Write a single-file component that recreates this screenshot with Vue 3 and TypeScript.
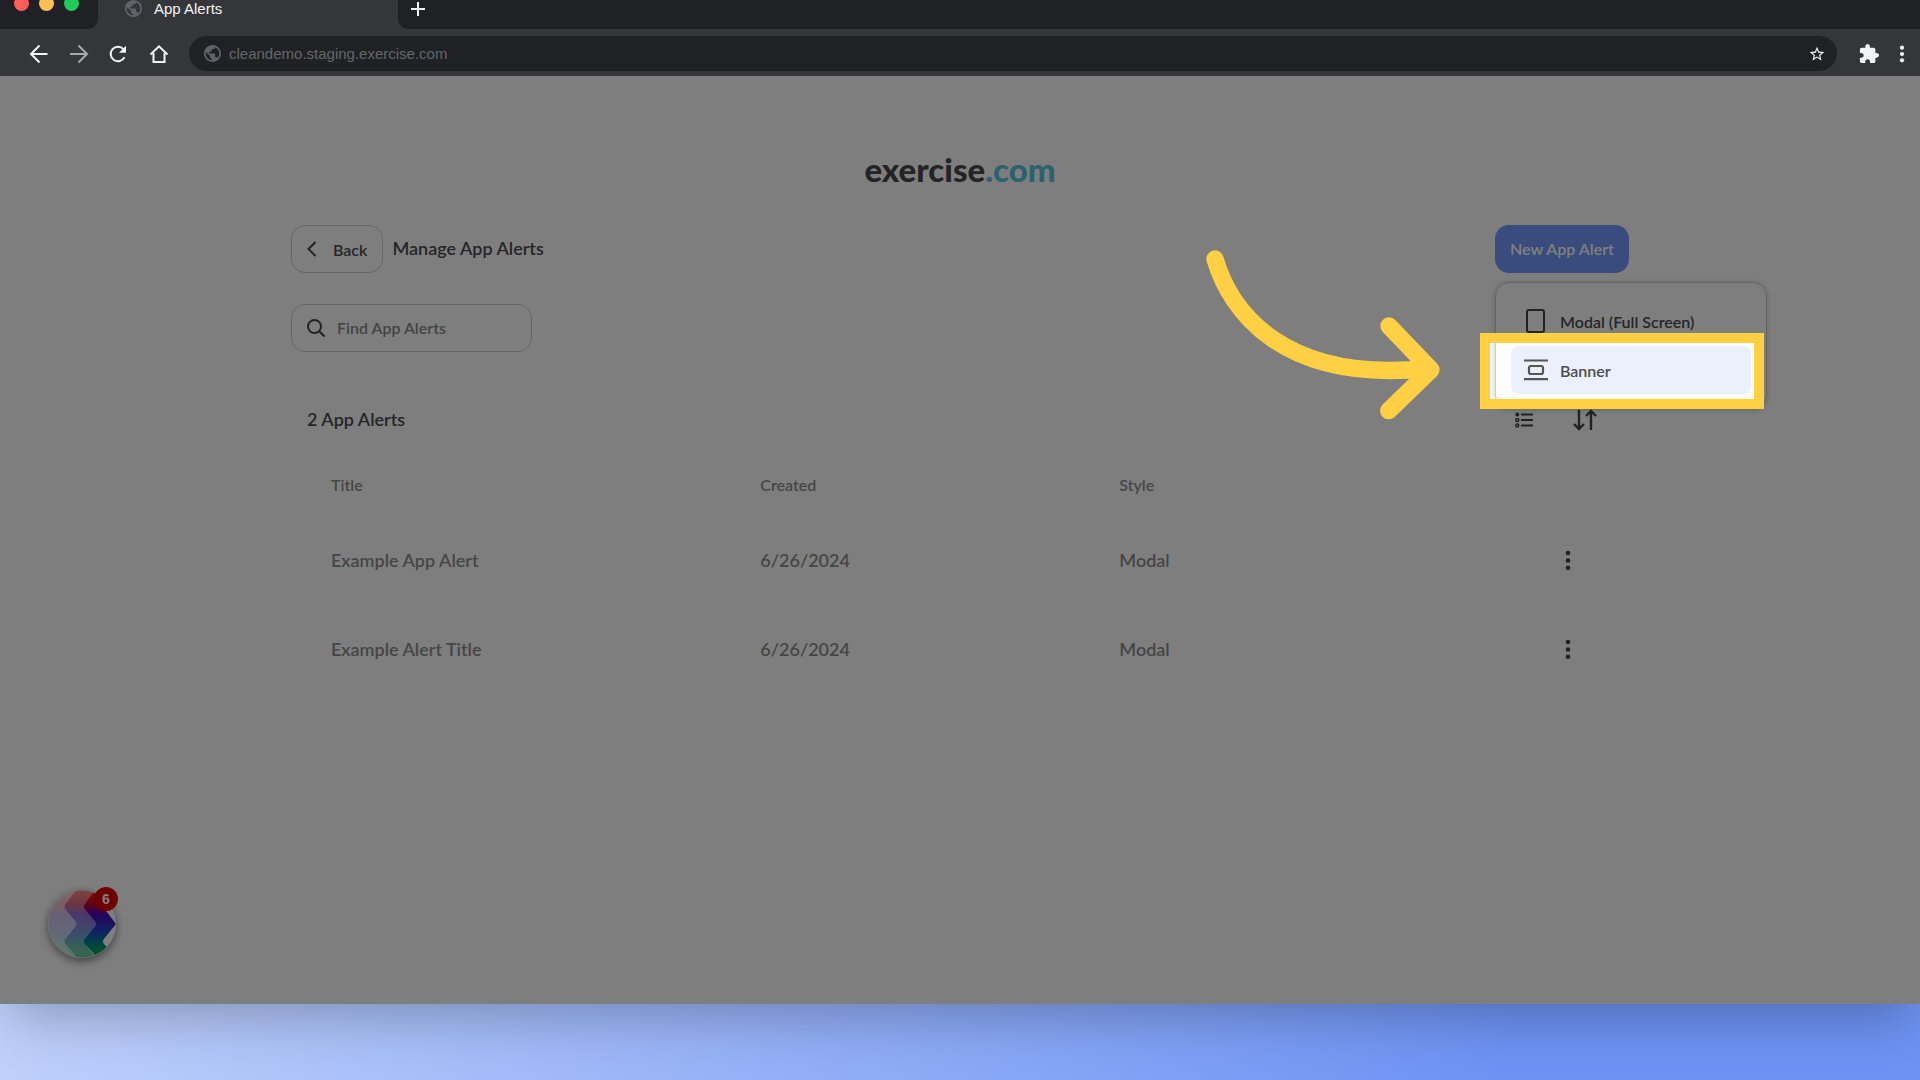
<script setup lang="ts">
import { ref } from 'vue'

interface AppAlert {
  title: string
  created: string
  style: string
}

const query = ref('')
const alerts: AppAlert[] = [
  { title: 'Example App Alert', created: '6/26/2024', style: 'Modal' },
  { title: 'Example Alert Title', created: '6/26/2024', style: 'Modal' },
]
</script>

<template>
  <div class="stage">
    <div class="window">
      <header class="chrome">
        <div class="tabs">
          <div class="lights"><i class="red"></i><i class="amber"></i><i class="green"></i></div>
          <div class="tab">
            <svg class="globe" viewBox="2 2 20 20"><path d="M12 2C6.48 2 2 6.48 2 12s4.48 10 10 10 10-4.48 10-10S17.52 2 12 2zm-1 17.93c-3.95-.49-7-3.85-7-7.93 0-.62.08-1.21.21-1.79L9 15v1c0 1.1.9 2 2 2v1.93zm6.9-2.54c-.26-.81-1-1.39-1.9-1.39h-1v-3c0-.55-.45-1-1-1H8v-2h2c.55 0 1-.45 1-1V7h2c1.1 0 2-.9 2-2v-.41c2.93 1.19 5 4.06 5 7.41 0 2.08-.8 3.97-2.1 5.39z" /></svg>
            <span>App Alerts</span>
          </div>
          <div class="tabs-rest">
            <button class="plain" aria-label="New tab">
              <svg width="16" height="16" viewBox="0 0 16 16"><path d="M8 2v14M1 9h14" stroke="#f1f3f4" stroke-width="2" /></svg>
            </button>
          </div>
        </div>
        <div class="toolbar">
          <button class="plain" aria-label="Go back">
            <svg width="20" height="20" viewBox="0 0 20 20" fill="none" stroke="#f1f3f4" stroke-width="2"><path d="M18.500 10H3M10.500 1.500L2 10l8.500 8.500" /></svg>
          </button>
          <button class="plain" aria-label="Go forward">
            <svg width="20" height="20" viewBox="0 0 20 20" fill="none" stroke="#a6a8ab" stroke-width="2"><path d="M1 10h16M9.500 1.500L18 10l-8.500 8.500" /></svg>
          </button>
          <button class="plain" aria-label="Reload">
            <svg width="20" height="20" viewBox="0 0 20 20" fill="none" stroke="#f1f3f4" stroke-width="2"><path d="M15.500 13.300A7.300 7.300 0 1 1 14.500 5.200" /><path d="M17 1.800v7h-7z" fill="#f1f3f4" stroke="none" /></svg>
          </button>
          <button class="plain" aria-label="Home">
            <svg width="20" height="20" viewBox="0 0 20 20" fill="none" stroke="#f1f3f4" stroke-width="2"><path d="M1.500 10.500L10 2.300l8.500 8.200M4.500 9v9h11V9" /></svg>
          </button>
          <div class="address">
            <svg class="globe" viewBox="2 2 20 20"><path d="M12 2C6.480 2 2 6.480 2 12s4.480 10 10 10 10-4.480 10-10S17.520 2 12 2zm-1 17.930c-3.950-.49-7-3.850-7-7.930 0-.62.08-1.210.21-1.790L9 15v1c0 1.100.9 2 2 2v1.930zm6.900-2.540c-.26-.81-1-1.390-1.900-1.390h-1v-3c0-.55-.45-1-1-1H8v-2h2c.55 0 1-.45 1-1V7h2c1.100 0 2-.9 2-2v-.41c2.930 1.190 5 4.060 5 7.410 0 2.080-.8 3.970-2.100 5.390z" /></svg>
            <input aria-label="Address" value="cleandemo.staging.exercise.com" />
            <svg width="16" height="16" viewBox="1 1 22 22" fill="#f1f3f4"><path d="M22 9.240l-7.190-.62L12 2 9.190 8.630 2 9.240l5.460 4.730L5.820 21 12 17.270 18.180 21l-1.630-7.030L22 9.240zM12 15.400l-3.760 2.270 1-4.280-3.320-2.880 4.380-.38L12 6.100l1.710 4.040 4.380.38-3.320 2.880 1 4.280L12 15.400z" /></svg>
          </div>
          <svg width="20" height="20" viewBox="1 1 22 22" fill="#f1f3f4"><path d="M20.500 11H19V7c0-1.100-.9-2-2-2h-4V3.500C13 2.120 11.880 1 10.500 1S8 2.120 8 3.500V5H4c-1.100 0-1.990.9-1.990 2v3.800H3.500c1.490 0 2.700 1.210 2.700 2.700s-1.210 2.700-2.700 2.700H2V20c0 1.100.9 2 2 2h3.800v-1.500c0-1.490 1.210-2.700 2.700-2.700 1.490 0 2.700 1.210 2.700 2.700V22H17c1.100 0 2-.9 2-2v-4h1.500c1.380 0 2.500-1.120 2.500-2.500S21.880 11 20.500 11z" /></svg>
          <svg width="6" height="20" viewBox="0 0 6 20" fill="#f1f3f4"><circle cx="3" cy="3.700" r="2.100" /><circle cx="3" cy="10" r="2.100" /><circle cx="3" cy="16.300" r="2.100" /></svg>
        </div>
      </header>

      <main class="page">
        <a class="logo" href="#">exercise<span>.com</span></a>
        <div class="content">
          <div class="heading">
            <button class="back">
              <svg width="10" height="16" viewBox="0 0 10 16" fill="none" stroke="#444" stroke-width="2"><path d="M8.500 1L1.500 8l7 7" /></svg>
              Back
            </button>
            <h1>Manage App Alerts</h1>
            <div class="create">
              <button class="new-alert">New App Alert</button>
              <div class="menu">
                <button class="item">
                  <svg width="24" height="24" viewBox="0 0 24 24" fill="none" stroke="#444" stroke-width="2"><rect x="3" y="1" width="17" height="22" rx="2" /></svg>
                  Modal (Full Screen)
                </button>
                <button class="item active">
                  <svg width="24" height="24" viewBox="0 0 24 24" fill="none" stroke="#555" stroke-width="2.200"><path d="M0 2.500h24M0 21.200h24" /><rect x="5" y="8" width="14" height="8" rx="2" /></svg>
                  Banner
                </button>
              </div>
              <div class="spotlight"></div>
              <svg class="pointer" width="300" height="220" viewBox="0 0 900 660" fill="none" stroke="#ffd043" stroke-width="52" stroke-linecap="round" stroke-linejoin="round"><path d="M105 117C150 270 305 492 745 445" /><path d="M627 318L753 449 626 572" /></svg>
            </div>
          </div>

          <label class="search">
            <svg width="18" height="18" viewBox="0 0 18 18" fill="none" stroke="#444" stroke-width="2"><circle cx="7.500" cy="7.500" r="6.500" /><path d="M12 12l5.500 5.500" /></svg>
            <input v-model="query" type="text" placeholder="Find App Alerts" aria-label="Find App Alerts" />
          </label>

          <div class="summary">
            <h2>2 App Alerts</h2>
            <div class="tools">
              <button class="plain" aria-label="List view">
                <svg width="18" height="18" viewBox="0 0 18 18" fill="none" stroke="#444"><path d="M6 3.500h12M6 9h12M6 14.500h12" stroke-width="2" /><circle cx="2.300" cy="3.500" r="2" fill="#444" stroke="none" /><circle cx="2.300" cy="9" r="1.500" stroke-width="1.500" /><circle cx="2.300" cy="14.500" r="1.500" stroke-width="1.500" /></svg>
              </button>
              <button class="plain" aria-label="Sort">
                <svg width="24" height="22" viewBox="0 0 24 22" fill="none" stroke="#444" stroke-width="2.400"><path d="M6 1v19M1 15l5 5 5-5M18 21V2M13 7l5-5 5 5" /></svg>
              </button>
            </div>
          </div>

          <table>
            <thead>
              <tr>
                <th class="c-title">Title</th>
                <th class="c-created">Created</th>
                <th>Style</th>
                <th class="c-actions" aria-label="Actions"></th>
              </tr>
            </thead>
            <tbody>
              <tr v-for="alert in alerts" :key="alert.title">
                <td class="c-title">{{ alert.title }}</td>
                <td>{{ alert.created }}</td>
                <td>{{ alert.style }}</td>
                <td class="c-actions">
                  <button class="plain" aria-label="More actions">
                    <svg width="6" height="20" viewBox="0 0 6 20" fill="#444"><circle cx="3" cy="3" r="2.300" /><circle cx="3" cy="10.500" r="2.300" /><circle cx="3" cy="17.700" r="2.300" /></svg>
                  </button>
                </td>
              </tr>
            </tbody>
          </table>
        </div>

        <button class="launcher" aria-label="Open messages">
          <svg width="68" height="68" viewBox="0 0 204 204">
            <defs>
              <linearGradient id="bolt" x1="0" y1="0" x2="0" y2="204" gradientUnits="userSpaceOnUse">
                <stop offset="0" stop-color="#ff3020" />
                <stop offset=".2" stop-color="#c00020" />
                <stop offset=".36" stop-color="#4808b8" />
                <stop offset=".58" stop-color="#2838c8" />
                <stop offset=".74" stop-color="#007898" />
                <stop offset=".88" stop-color="#00a060" />
              </linearGradient>
              <clipPath id="disc"><circle cx="102" cy="102" r="101" /></clipPath>
            </defs>
            <g clip-path="url(#disc)">
              <rect width="204" height="204" fill="#fff" />
              <path d="M0 0H85L52 42Q46 50 52 58L82 94Q88 102 82 110L52 146Q46 154 52 162L88 204H0z" fill="url(#bolt)" opacity=".25" />
              <path d="M85 0H140L110 42Q104 50 110 58L140 94Q146 102 140 110L110 146Q104 154 110 162L146 204H88L52 162Q46 154 52 146L82 110Q88 102 82 94L52 58Q46 50 52 42z" fill="url(#bolt)" opacity=".58" />
              <path d="M140 0H172L166 52 204 102 168 146Q162 154 168 162L176 170 150 204 110 162Q104 154 110 146L140 110Q146 102 140 94L110 58Q104 50 110 42z" fill="url(#bolt)" />
            </g>
          </svg>
          <span class="count">6</span>
        </button>
      </main>
    </div>
  </div>
</template>

<style>
body {
  margin: 0;
}
</style>

<style scoped>
* {
  box-sizing: border-box;
}
svg {
  display: block;
  flex: none;
}
button,
input {
  font: inherit;
  color: inherit;
}
.plain {
  display: flex;
  padding: 0;
  border: 0;
  background: none;
}
.stage {
  display: flex;
  min-height: 100vh;
  padding-bottom: 76px;
  overflow: hidden;
  background: linear-gradient(105deg, #bfd0fb 12%, #6d92f3 81%);
  font-family: Lato, "Noto Sans", sans-serif;
}
.window {
  display: flex;
  flex: 1;
  flex-direction: column;
  min-width: 0;
  box-shadow: 0 24px 48px -10px rgba(0, 0, 0, 0.25);
}

/* browser frame */
.chrome {
  background: #35363a;
  color: #f1f3f4;
  font: 15px/20px "Liberation Sans", Arial, sans-serif;
}
.tabs {
  display: flex;
  height: 29px;
}
.lights {
  display: flex;
  gap: 10px;
  width: 98px;
  padding-left: 14px;
  border-radius: 0 0 10px 0;
  background: #202124;
}
.lights i {
  width: 15px;
  height: 15px;
  margin-top: -4px;
  border-radius: 50%;
}
.red {
  background: #ff5f5a;
}
.amber {
  background: #ffbe50;
}
.green {
  background: #20cc58;
}
.tab {
  display: flex;
  align-items: flex-start;
  gap: 12px;
  width: 300px;
  padding-left: 27px;
}
.tab span {
  margin-top: -1px;
}
.globe {
  width: 17px;
  height: 17px;
  fill: #5f6368;
}
.tabs-rest {
  flex: 1;
  padding-left: 12px;
  border-radius: 0 0 0 10px;
  background: #202124;
}
.toolbar {
  display: flex;
  align-items: center;
  gap: 20px;
  height: 47px;
  padding: 2px 15px 0 29px;
}
.address {
  display: flex;
  flex: 1;
  align-items: center;
  gap: 8px;
  height: 35px;
  margin-right: 2px;
  padding: 0 12px 0 15px;
  border-radius: 18px;
  background: #202124;
}
.address input {
  flex: 1;
  min-width: 0;
  padding: 0;
  border: 0;
  outline: 0;
  background: none;
  color: #65676b;
}

/* application page */
.page {
  position: relative;
  flex: 1;
  padding-top: 73px;
  overflow: hidden;
  background: #fdfdfd;
  color: #4c4c50;
}
.logo {
  display: block;
  width: fit-content;
  margin: 0 auto;
  color: #484848;
  font-size: 33px;
  font-weight: 900;
  line-height: 40px;
  text-decoration: none;
}
.logo span {
  color: #58c4dc;
}
.content {
  max-width: 1338px;
  margin: 36px auto 0;
}
.heading {
  display: flex;
  align-items: center;
  gap: 9px;
}
.back {
  display: flex;
  align-items: center;
  gap: 16px;
  height: 48px;
  padding: 0 15px;
  border: 1px solid #ccc;
  border-radius: 14px;
  background: none;
  font-size: 16px;
  font-weight: 600;
}
h1,
h2 {
  margin: 0;
  padding-bottom: 2px;
  font-size: 18px;
  font-weight: 600;
  line-height: 24px;
}
.create {
  position: relative;
  z-index: 5;
  margin-left: auto;
}
.new-alert {
  display: block;
  width: 134px;
  height: 48px;
  padding: 0 0 2px;
  border: 0;
  border-radius: 14px;
  background: #7496fa;
  color: #fff;
  font-size: 16px;
  font-weight: 600;
}
.menu {
  display: grid;
  position: absolute;
  top: 57px;
  left: 0;
  gap: 1px;
  width: 272px;
  padding: 14px 15px;
  border: 1px solid #ccc;
  border-radius: 14px;
  background: #fdfdfd;
  box-shadow: 0 1px 6px rgba(0, 0, 0, 0.2);
}
.item {
  display: flex;
  align-items: center;
  gap: 12px;
  width: 100%;
  height: 48px;
  padding: 0 13px;
  border: 0;
  border-radius: 8px;
  background: none;
  font-size: 16px;
  font-weight: 600;
}
.item.active {
  background: #ebf0fc;
}
/* the spread shadow dims everything on the page but the framed menu item */
.spotlight {
  position: absolute;
  top: 108px;
  left: -15px;
  width: 284px;
  height: 76px;
  border: 10px solid #ffd043;
  box-shadow: 0 0 0 4000px rgba(0, 0, 0, 0.5);
  pointer-events: none;
}
.pointer {
  position: absolute;
  top: -5px;
  left: -315px;
  pointer-events: none;
}
.search {
  display: flex;
  align-items: center;
  gap: 12px;
  width: 241px;
  height: 48px;
  margin-top: 31px;
  padding: 0 15px;
  border: 1px solid #ccc;
  border-radius: 14px;
}
.search input {
  flex: 1;
  min-width: 0;
  padding: 0 0 2px;
  border: 0;
  outline: 0;
  background: none;
  font-size: 16px;
  font-weight: 600;
}
.search input::placeholder {
  color: #888;
}
.summary {
  display: flex;
  align-items: center;
  justify-content: space-between;
  height: 40px;
  margin-top: 48px;
  padding: 0 32px 0 16px;
}
.tools {
  display: flex;
  align-items: center;
  gap: 40px;
}
table {
  width: 100%;
  margin-top: 14px;
  border-collapse: collapse;
  table-layout: fixed;
  color: #8c8c8c;
}
th,
td {
  padding: 0 1px 2px;
  font-weight: 600;
  text-align: left;
}
th {
  height: 62px;
  font-size: 16px;
}
td {
  height: 89px;
  font-size: 18px;
}
.c-title {
  width: 35%;
  padding-left: 40px;
}
.c-created {
  width: 359px;
}
.c-actions {
  width: 88px;
  padding-left: 24px;
}
.launcher {
  position: absolute;
  bottom: 46px;
  left: 48px;
  padding: 0;
  border: 0;
  border-radius: 50%;
  background: none;
  box-shadow: 0 3px 10px rgba(0, 0, 0, 0.5);
}
.count {
  position: absolute;
  top: -3px;
  right: -2px;
  width: 24px;
  height: 24px;
  border-radius: 50%;
  background: #e00000;
  color: #fff;
  font: bold 14px/24px "Liberation Sans", Arial, sans-serif;
  text-align: center;
}
</style>
